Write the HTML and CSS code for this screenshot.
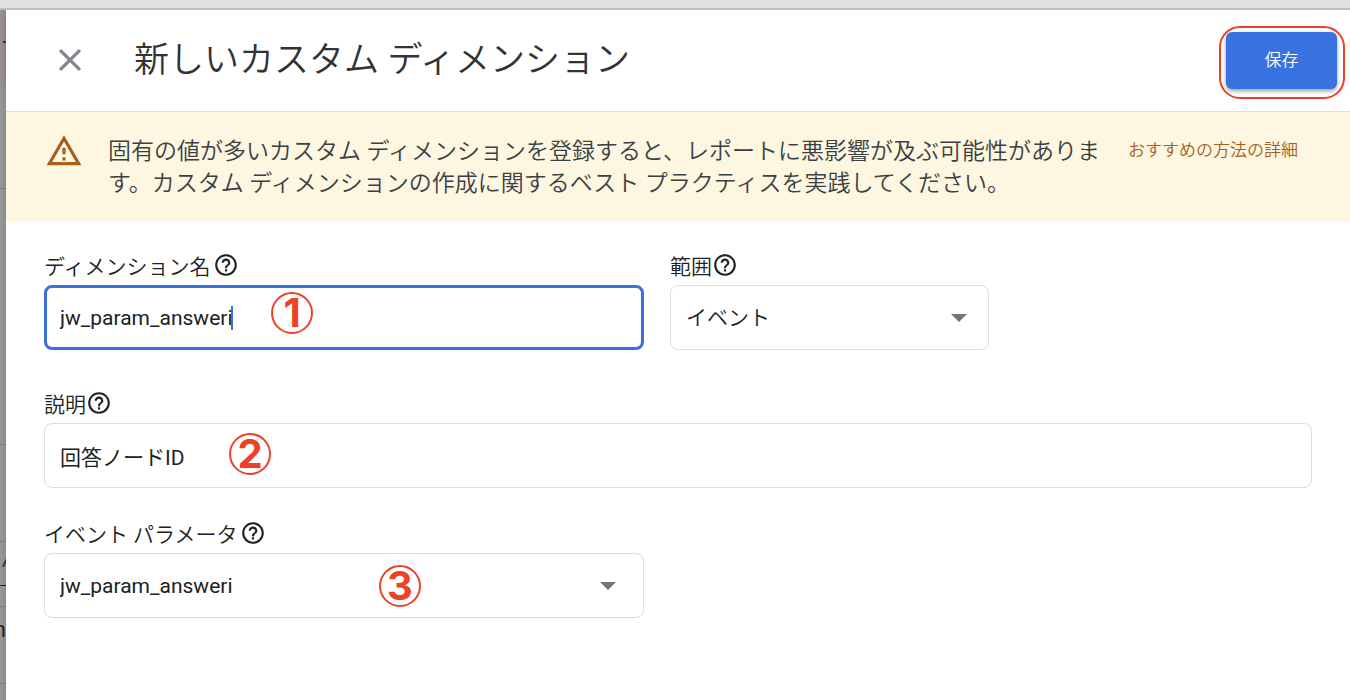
FILE: index.html
```html
<!DOCTYPE html>
<html lang="ja">
  <head>
    <meta charset="UTF-8">
    <meta name="viewport" content="width=device-width, initial-scale=1.0">
    <title>新しいカスタム ディメンション</title>
    <link rel="stylesheet" href="styles.css">
  </head>
  <body>
    <svg class="sprite" aria-hidden="true">
      <symbol id="help" viewBox="0 0 24 24">
        <path d="M11 18h2v-2h-2v2zm1-16C6.480 2 2 6.480 2 12s4.480 10 10 10 10-4.480 10-10S17.520 2 12 2zm0 18c-4.410 0-8-3.590-8-8s3.590-8 8-8 8 3.590 8 8-3.590 8-8 8zm0-14c-2.210 0-4 1.790-4 4h2c0-1.100.9-2 2-2s2 .9 2 2c0 2-3 1.750-3 5h2c0-2.250 3-2.500 3-5 0-2.210-1.790-4-4-4z"/>
      </symbol>
    </svg>

    <div class="topbar"></div>
    <div class="page">
      <!-- halaman di belakang panel -->
      <div class="backdrop" aria-hidden="true">
        <div class="strip strip-alert"><span class="dash"></span></div>
        <div class="strip strip-a"></div>
        <div class="strip strip-b"></div>
        <div class="strip strip-c"></div>
        <div class="strip strip-d"><span class="slash"></span><span class="rule"></span></div>
        <div class="strip strip-e"><span class="letter">n</span></div>
        <div class="strip strip-f"></div>
      </div>

      <main class="panel">
        <header class="header">
          <button type="button" class="close" aria-label="閉じる">
            <svg viewBox="0 0 24 24"><path d="M19 6.410L17.590 5 12 10.590 6.410 5 5 6.410 10.590 12 5 17.590 6.410 19 12 13.410 17.590 19 19 17.590 13.410 12z"/></svg>
          </button>
          <h1 class="title">新しいカスタム ディメンション</h1>
          <button type="button" class="save">保存</button>
        </header>

        <div class="banner">
          <svg class="warning" viewBox="0 0 24 24"><path d="M12 5.990L19.530 19H4.470L12 5.990M12 2L1 21h22L12 2zm1 14h-2v2h2v-2zm0-6h-2v4h2v-4z"/></svg>
          <p class="banner-text">固有の値が多いカスタム ディメンションを登録すると、レポートに悪影響が及ぶ可能性があります。カスタム ディメンションの作成に関するベスト プラクティスを実践してください。</p>
          <a href="#" class="banner-link">おすすめの方法の詳細</a>
        </div>

        <form class="form">
          <div class="row">
            <div class="field">
              <div class="label spaced">
                <label for="name">ディメンション名</label>
                <svg class="help"><use href="#help"/></svg>
              </div>
              <div class="control">
                <input type="text" id="name" class="box active" value="jw_param_answeri">
                <span class="caret"></span>
                <span class="mark mark-1">1</span>
              </div>
            </div>
            <div class="field">
              <div class="label">
                <label for="scope">範囲</label>
                <svg class="help"><use href="#help"/></svg>
              </div>
              <div class="control">
                <select id="scope" class="box scope">
                  <option>イベント</option>
                </select>
                <svg class="arrow" viewBox="0 0 16 8"><path d="M0 0h16L8 8z"/></svg>
              </div>
            </div>
          </div>

          <div class="field description">
            <div class="label">
              <label for="description">説明</label>
              <svg class="help"><use href="#help"/></svg>
            </div>
            <div class="control">
              <input type="text" id="description" class="box" value="回答ノードID">
              <span class="mark mark-2">2</span>
            </div>
          </div>

          <div class="row parameter">
            <div class="field">
              <div class="label spaced">
                <label for="parameter">イベント パラメータ</label>
                <svg class="help"><use href="#help"/></svg>
              </div>
              <div class="control">
                <select id="parameter" class="box">
                  <option>jw_param_answeri</option>
                </select>
                <svg class="arrow arrow-inset" viewBox="0 0 16 8"><path d="M0 0h16L8 8z"/></svg>
                <span class="mark mark-3">3</span>
              </div>
            </div>
          </div>
        </form>
      </main>
    </div>
  </body>
</html>
```

FILE: styles.css
```css
* {
  box-sizing: border-box;
}

body {
  margin: 0;
  min-height: 100vh;
  display: flex;
  flex-direction: column;
  font-family: Roboto, "Noto Sans CJK JP", sans-serif;
  color: #202124;
  background: #fff;
}

button, input, select {
  font-family: inherit;
}

svg {
  fill: currentColor;
  flex-shrink: 0;
}

.sprite {
  display: none;
}

.topbar {
  height: 10px;
  background: #e2e2e2;
  border-bottom: 2px solid #c0c0c0;
}

.page {
  flex: 1;
  display: grid;
  grid-template-columns: 6px 1fr;
}

/* backdrop */
.backdrop {
  background: linear-gradient(to right, #999, #8c8c8c);
  overflow: hidden;
}

.strip {
  position: relative;
  border-bottom: 1px solid #7b7b7b;
}

.strip-alert {
  height: 77px;
  border-bottom: 0;
  background: linear-gradient(to right, #9c8f8f, #8e8383);
}

.strip-a { height: 102px; }
.strip-b { height: 256px; }
.strip-c { height: 97px; }
.strip-d { height: 65px; }
.strip-e { height: 77px; }
.strip-f { border-bottom: 0; }

.dash {
  position: absolute;
  top: 31px;
  right: 0;
  width: 3px;
  height: 2px;
  background: #333;
}

.slash {
  position: absolute;
  top: 16px;
  right: 0;
  width: 2px;
  height: 9px;
  background: #333;
  transform: skewX(-25deg);
}

.rule {
  position: absolute;
  top: 43px;
  left: 0;
  width: 6px;
  height: 1px;
  background: #222;
}

.letter {
  position: absolute;
  top: 10px;
  right: 0;
  font-size: 22px;
  line-height: 26px;
}

/* header */
.header {
  display: flex;
  align-items: center;
  padding: 0 13px 0 45px;
  height: 102px;
  border-bottom: 1px solid #dadce0;
}

.close {
  display: flex;
  padding: 0 0 2px;
  border: 0;
  background: none;
  color: #80868b;
}

.close svg {
  width: 38px;
  height: 38px;
}

.title {
  flex: 1;
  margin: 0;
  padding: 0 0 0 45px;
  font-size: 35px;
  line-height: 48px;
  font-weight: 350;
  color: #333;
}

.save {
  position: relative;
  width: 111px;
  height: 57px;
  padding: 0 0 4px;
  border: 0;
  border-radius: 6px;
  background: #3871e0;
  color: #fff;
  font-size: 17px;
  font-weight: 350;
  box-shadow: 0 2px 4px rgba(0, 0, 0, 0.4);
}

.save::after {
  content: "";
  position: absolute;
  inset: -6px -8px -10px -7px;
  border: 2px solid #e8402a;
  border-radius: 21px;
}

/* banner */
.banner {
  display: flex;
  align-items: flex-start;
  padding: 20px 52px 21px 39px;
  background: #fdf6e0;
}

.warning {
  width: 38px;
  height: 38px;
  color: #a5611b;
}

.banner-text {
  flex: 1;
  margin: 4px 24px 0 25px;
  font-size: 23px;
  line-height: 32px;
  font-weight: 350;
  color: #3c4043;
}

.banner-link {
  margin-top: 2px;
  font-size: 17px;
  line-height: 32px;
  font-weight: 350;
  color: #a5611b;
  text-decoration: none;
  white-space: nowrap;
}

/* form */
.form {
  padding: 24px 38px;
}

.row {
  display: grid;
  grid-template-columns: 600fr 319fr 297fr;
  gap: 26px;
}

.description {
  margin-top: 33px;
}

.parameter {
  margin-top: 25px;
}

.label {
  display: flex;
  align-items: center;
  height: 40px;
  font-size: 21px;
  font-weight: 350;
}

.spaced {
  gap: 2px;
}

.help {
  width: 26px;
  height: 26px;
}

.control {
  position: relative;
}

.box {
  display: block;
  width: 100%;
  height: 65px;
  padding: 0 15px;
  border: 1px solid #dadce0;
  border-radius: 8px;
  background: #fff;
  color: #202124;
  font-size: 21px;
  appearance: none;
  outline: none;
}

.scope {
  font-weight: 350;
}

.active {
  padding: 0 13px;
  border: 3px solid #3871e0;
}

.caret {
  position: absolute;
  top: 21px;
  left: 187px;
  width: 2px;
  height: 24px;
  background: #3871e0;
}

.arrow {
  position: absolute;
  top: 29px;
  right: 22px;
  width: 16px;
  height: 8px;
  color: #757575;
  pointer-events: none;
}

.arrow-inset {
  right: 28px;
}

/* numbered marks over the fields */
.mark {
  position: absolute;
  width: 42px;
  height: 42px;
  border: 2px solid #ee4226;
  border-radius: 50%;
  color: #ee4226;
  font: bold 40px/38px Inter, sans-serif;
  text-align: center;
}

.mark-1 {
  top: 7px;
  left: 227px;
}

.mark-2 {
  top: 10px;
  left: 185px;
}

.mark-3 {
  top: 12px;
  left: 335px;
}
```
